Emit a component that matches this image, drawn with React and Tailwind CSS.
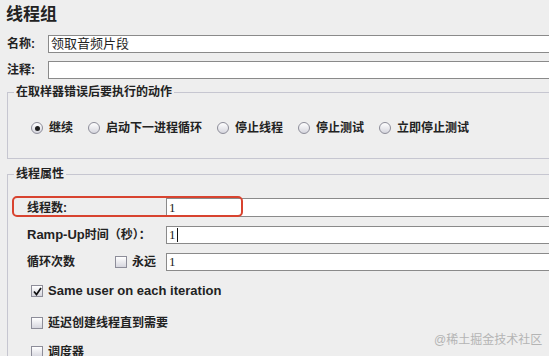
import React from "react";

const font = { fontFamily: '"Liberation Sans", "Noto Sans CJK SC", sans-serif' };

const Radio = ({ checked, label }) => (
  <div className="flex items-center gap-[6px]">
    <span className="w-[12px] h-[12px] rounded-full border border-[#8d8d99] bg-gradient-to-b from-white to-[#d6d6de] flex items-center justify-center">
      {checked && <span className="w-[5px] h-[5px] rounded-full bg-[#1e1e1e]" />}
    </span>
    <span>{label}</span>
  </div>
);

const Check = ({ checked }) => (
  <span className="w-[12px] h-[12px] border border-[#8d8d99] bg-gradient-to-b from-white to-[#d6d6de] flex items-center justify-center shrink-0">
    {checked && (
      <svg width="9" height="9" viewBox="0 0 9 9">
        <path d="M1 4.5 L3.5 7.5 L8 1" fill="none" stroke="#111" strokeWidth="1.7" />
      </svg>
    )}
  </span>
);

const Field = ({ value, caret, className = "" }) => (
  <div className={`flex-1 bg-white border border-[#8a8a8a] flex items-center pl-[2px] text-[13px] font-normal text-[#222] ${className}`}>
    <span style={{ fontFamily: '"Liberation Serif", serif' }}>{value}</span>
    {caret && <span className="w-px h-[14px] bg-[#111] ml-px" />}
  </div>
);

export default function App() {
  return (
    <div className="w-[549px] h-[356px] bg-[#eeeeee] overflow-hidden relative text-[#222]" style={font}>
      <div className="w-[580px]">
        <div className="pl-[6px] pt-[3px] text-[17px] leading-[24px] font-bold">线程组</div>

        <div className="mt-[8px] flex items-center h-[18px] text-[12px] font-semibold">
          <span className="w-[48px] pl-[7px]">名称:</span>
          <Field value={<span style={font}>领取音频片段</span>} className="h-[18px]" />
        </div>
        <div className="mt-[8px] flex items-center h-[18px] text-[12px] font-semibold">
          <span className="w-[48px] pl-[7px]">注释:</span>
          <Field value="" className="h-[18px]" />
        </div>

        <fieldset className="mt-[5px] ml-[7px] border border-[#c6c6d0] pl-[6px] pt-[20px] pb-[22px] text-[12px] font-semibold">
          <legend className="px-[2px] leading-[16px]">在取样器错误后要执行的动作</legend>
          <div className="flex items-center h-[16px] pl-[17px]">
            <Radio checked label="继续" />
            <div className="ml-[15px]"><Radio label="启动下一进程循环" /></div>
            <div className="ml-[15px]"><Radio label="停止线程" /></div>
            <div className="ml-[15px]"><Radio label="停止测试" /></div>
            <div className="ml-[15px]"><Radio label="立即停止测试" /></div>
          </div>
        </fieldset>

        <fieldset className="relative mt-[7px] ml-[7px] border border-[#c6c6d0] pl-[19px] pt-[16px] pb-[20px] text-[12px] font-semibold">
          <legend className="px-[2px] -ml-[13px] leading-[16px]">线程属性</legend>

          <div className="absolute left-[4px] top-[14px] w-[231px] h-[21px] rounded-[5px] border-2 border-[#d8432f]" />

          <div className="flex items-center h-[19px]">
            <span className="w-[139px]">线程数:</span>
            <Field value="1" className="h-[19px]" />
          </div>
          <div className="mt-[9px] flex items-center h-[18px]">
            <span className="w-[139px]">
              <span className="text-[13px]">Ramp-Up</span>时间（秒）：
            </span>
            <Field value="1" caret className="h-[18px]" />
          </div>
          <div className="mt-[9px] flex items-center h-[18px]">
            <span className="w-[88px]">循环次数</span>
            <Check />
            <span className="ml-[5px] w-[34px]">永远</span>
            <Field value="1" className="h-[18px]" />
          </div>

          <div className="mt-[12px] ml-[4px] flex items-center gap-[5px] h-[16px]">
            <Check checked />
            <span className="text-[13px]">Same user on each iteration</span>
          </div>
          <div className="mt-[16px] ml-[4px] flex items-center gap-[5px] h-[16px]">
            <Check />
            <span>延迟创建线程直到需要</span>
          </div>
          <div className="mt-[13px] ml-[4px] flex items-center gap-[5px] h-[16px]">
            <Check />
            <span>调度器</span>
          </div>
        </fieldset>
      </div>

      <div className="absolute left-[434px] top-[331px] text-[12px] text-[#b4b4b4]">@稀土掘金技术社区</div>
    </div>
  );
}
